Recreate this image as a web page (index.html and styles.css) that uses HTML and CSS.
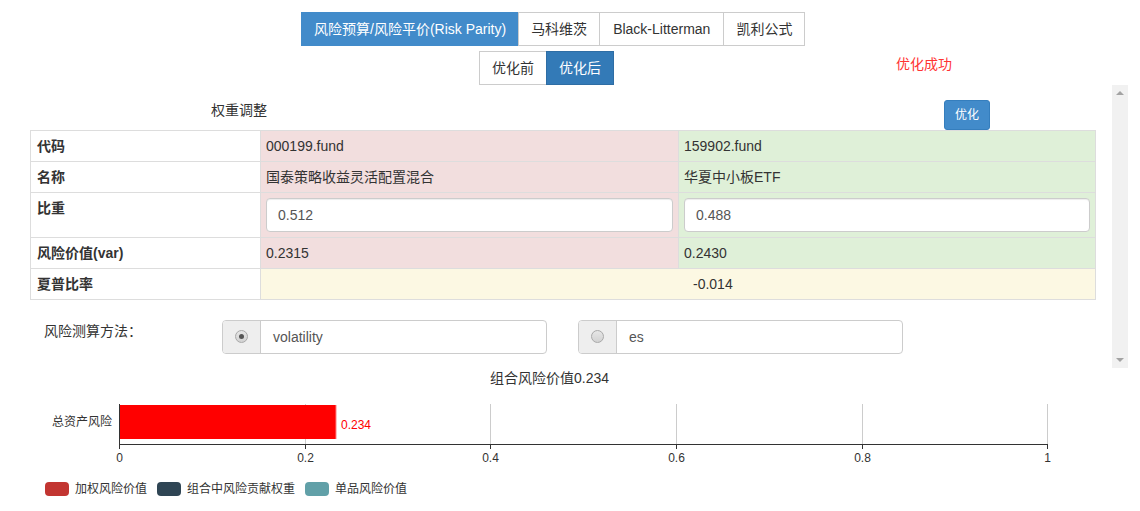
FILE: index.html
```html
<!DOCTYPE html>
<html lang="zh">
<head>
<meta charset="utf-8">
<link rel="stylesheet" href="styles.css">
</head>
<body>
<div class="tabs-row">
  <div class="btn-group">
    <span class="tab active">风险预算/风险平价(Risk Parity)</span><span class="tab">马科维茨</span><span class="tab bl">Black-Litterman</span><span class="tab">凯利公式</span>
  </div>
</div>
<div class="sub-row">
  <div class="btn-group">
    <span class="tab">优化前</span><span class="tab dark">优化后</span>
  </div>
  <span class="msg">优化成功</span>
</div>
<div class="panel">
  <div class="panel-body">
    <div class="title-row">
      <span class="wtitle">权重调整</span>
      <span class="opt-btn">优化</span>
    </div>
    <table class="grid">
      <tr><th>代码</th><td class="pink">000199.fund</td><td class="green">159902.fund</td></tr>
      <tr><th>名称</th><td class="pink">国泰策略收益灵活配置混合</td><td class="green">华夏中小板ETF</td></tr>
      <tr><th>比重</th><td class="pink"><div class="inp">0.512</div></td><td class="green"><div class="inp">0.488</div></td></tr>
      <tr><th>风险价值(var)</th><td class="pink">0.2315</td><td class="green">0.2430</td></tr>
      <tr><th>夏普比率</th><td class="yellow sharpe" colspan="2">-0.014</td></tr>
    </table>
    <div class="method-row">
      <span class="mlabel">风险测算方法：</span>
      <div class="igroup g1"><span class="addon"><span class="radio checked"></span></span><span class="itext">volatility</span></div>
      <div class="igroup g2"><span class="addon"><span class="radio"></span></span><span class="itext">es</span></div>
    </div>
  </div>
  <div class="scrollbar">
    <span class="arr up"></span>
    <span class="arr down"></span>
  </div>
</div>
<div class="chart-title">组合风险价值0.234</div>
<svg class="chart" width="1140" height="85" viewBox="0 0 1140 85">
  <g stroke="#cccccc" stroke-width="1">
    <line x1="305.5" y1="15" x2="305.5" y2="55"/>
    <line x1="490.5" y1="15" x2="490.5" y2="55"/>
    <line x1="676.5" y1="15" x2="676.5" y2="55"/>
    <line x1="862.5" y1="15" x2="862.5" y2="55"/>
    <line x1="1047.5" y1="15" x2="1047.5" y2="55"/>
  </g>
  <rect x="120" y="16" width="216" height="34" fill="#ff0000"/>
  <line x1="336" y1="16" x2="336" y2="50" stroke="#ff8080" stroke-width="1"/>
  <g stroke="#333333" stroke-width="1">
    <line x1="119.5" y1="15" x2="119.5" y2="56"/>
    <line x1="119" y1="55.5" x2="1048" y2="55.5"/>
    <line x1="119.5" y1="55" x2="119.5" y2="60"/>
    <line x1="305.5" y1="55" x2="305.5" y2="60"/>
    <line x1="490.5" y1="55" x2="490.5" y2="60"/>
    <line x1="676.5" y1="55" x2="676.5" y2="60"/>
    <line x1="862.5" y1="55" x2="862.5" y2="60"/>
    <line x1="1047.5" y1="55" x2="1047.5" y2="60"/>
  </g>
  <g class="ax" text-anchor="middle">
    <text x="119.5" y="73">0</text>
    <text x="305.5" y="73">0.2</text>
    <text x="490.5" y="73">0.4</text>
    <text x="676.5" y="73">0.6</text>
    <text x="862.5" y="73">0.8</text>
    <text x="1047.5" y="73">1</text>
  </g>
  <text class="ax" x="112" y="37" text-anchor="end">总资产风险</text>
  <text class="barlbl" x="341" y="40">0.234</text>
</svg>
<div class="legend">
  <span class="li"><span class="sw c1"></span>加权风险价值</span>
  <span class="li"><span class="sw c2"></span>组合中风险贡献权重</span>
  <span class="li"><span class="sw c3"></span>单品风险价值</span>
</div>
</body>
</html>
```
FILE: styles.css
```css
html, body {
  margin: 0;
  padding: 0;
  background: #ffffff;
}
body {
  width: 1140px;
  height: 511px;
  overflow: hidden;
  font-family: "Liberation Sans", Arial, "Noto Sans CJK SC", sans-serif;
  font-size: 14px;
  line-height: 20px;
  color: #333333;
  padding-top: 12px;
  box-sizing: border-box;
}
.tabs-row {
  display: flex;
  padding-left: 301px;
}
.btn-group {
  display: flex;
}
.tab {
  display: block;
  padding: 6px 12px;
  border: 1px solid #cccccc;
  margin-left: -1px;
  background: #ffffff;
  color: #333333;
  white-space: nowrap;
  height: 20px;
}
.tab:first-child {
  margin-left: 0;
}
.tab.bl {
  padding: 6px 13px;
}
.tab.active {
  background: #428bca;
  border-color: #428bca;
  color: #ffffff;
}
.tab.dark {
  background: #337ab7;
  border-color: #2e6da4;
  color: #ffffff;
}
.sub-row {
  display: flex;
  align-items: flex-start;
  padding-left: 479px;
  margin-top: 5px;
}
.msg {
  color: #ff3333;
  margin-left: 282px;
  margin-top: 3px;
}
.panel {
  display: flex;
  width: 1128px;
  height: 283px;
}
.panel-body {
  width: 1112px;
  padding-top: 15px;
  box-sizing: border-box;
}
.title-row {
  display: flex;
  align-items: flex-start;
  height: 30px;
}
.wtitle {
  margin-left: 211px;
}
.opt-btn {
  margin-left: 677px;
  height: 18px;
  padding: 5px 10px;
  font-size: 12px;
  line-height: 18px;
  background: #428bca;
  border: 1px solid #357ebd;
  border-radius: 3px;
  color: #ffffff;
}
.grid {
  margin-left: 30px;
  width: 1066px;
  border-collapse: collapse;
  table-layout: fixed;
}
.grid th, .grid td {
  border: 1px solid #dddddd;
  padding: 5px 5px;
  text-align: left;
  vertical-align: top;
  line-height: 20px;
}
.grid th {
  width: 218px;
  font-weight: bold;
  padding-left: 6px;
}
.grid td.pink {
  width: 407px;
  background: #f2dede;
}
.grid td.green {
  background: #dff0d8;
}
.grid td.yellow {
  background: #fcf8e3;
}
.grid td.sharpe {
  padding-left: 432px;
}
.inp {
  height: 20px;
  padding: 6px 11px;
  border: 1px solid #cccccc;
  border-radius: 4px;
  background: #ffffff;
  color: #555555;
  box-shadow: inset 0 1px 1px rgba(0,0,0,0.075);
}
.method-row {
  display: flex;
  align-items: flex-start;
  margin-top: 20px;
}
.mlabel {
  margin-left: 44px;
  width: 178px;
  margin-top: 1px;
}
.igroup {
  display: flex;
  width: 325px;
  height: 34px;
  box-sizing: border-box;
  border: 1px solid #cccccc;
  border-radius: 4px;
  background: #ffffff;
}
.g2 {
  margin-left: 31px;
}
.addon {
  width: 37px;
  background: #eeeeee;
  border-right: 1px solid #cccccc;
  border-radius: 3px 0 0 3px;
  display: flex;
  align-items: center;
  justify-content: center;
}
.radio {
  width: 11px;
  height: 11px;
  border-radius: 50%;
  border: 1px solid #a9a9a9;
  background: linear-gradient(#e6e6e6, #d2d2d2);
  display: flex;
  align-items: center;
  justify-content: center;
  margin-top: -2px;
}
.radio.checked::after {
  content: "";
  width: 5px;
  height: 5px;
  border-radius: 50%;
  background: #555555;
}
.itext {
  padding: 6px 12px;
  color: #555555;
}
.scrollbar {
  width: 16px;
  background: #f1f1f1;
  display: flex;
  flex-direction: column;
  justify-content: space-between;
  align-items: center;
  padding: 6px 0;
  box-sizing: border-box;
}
.arr {
  width: 0;
  height: 0;
  border-left: 4px solid transparent;
  border-right: 4px solid transparent;
}
.arr.up {
  border-bottom: 4px solid #a3a3a3;
}
.arr.down {
  border-top: 4px solid #a3a3a3;
}
.chart-title {
  padding-left: 490px;
  height: 21px;
  line-height: 20px;
}
.chart {
  display: block;
}
.ax {
  font-family: "Liberation Sans", "Noto Sans CJK SC", sans-serif;
  font-size: 12px;
  fill: #333333;
}
.barlbl {
  font-family: "Liberation Sans", sans-serif;
  font-size: 12px;
  fill: #ff0000;
}
.legend {
  display: flex;
  padding-left: 45px;
  margin-top: 8px;
  font-size: 12px;
  line-height: 14px;
  color: #333333;
}
.li {
  display: flex;
  align-items: center;
  margin-right: 10px;
}
.sw {
  display: inline-block;
  width: 24px;
  height: 14px;
  border-radius: 4px;
  margin-right: 6px;
}
.c1 { background: #c23531; }
.c2 { background: #2f4554; }
.c3 { background: #61a0a8; }
```
